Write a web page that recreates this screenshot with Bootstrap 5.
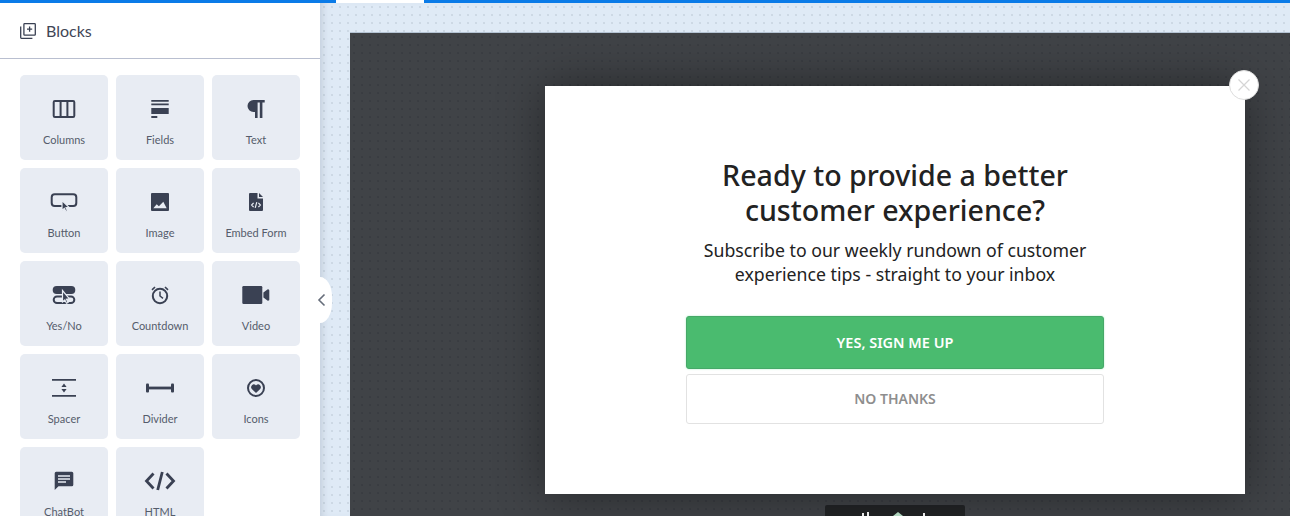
<!DOCTYPE html>
<html lang="en">
<head>
  <meta charset="UTF-8" />
  <meta name="viewport" content="width=device-width, initial-scale=1.0"/>
  <title>Blocks - Popup Editor</title>
  <link href="https://cdn.jsdelivr.net/npm/bootstrap@5.3.0/dist/css/bootstrap.min.css" rel="stylesheet">
  <style>
    html, body {
      height: 516px;
      overflow: hidden;
    }
    body {
      background: #fff;
      font-family: "Lato", "Liberation Sans", sans-serif;
    }
    .top-seg { height: 3px; background: #0a7be8; }
    .top-seg-on { width: 88px; background: #fff; }
    .top-seg-start { width: 336px; }
    .editor-main { height: 513px; }
    .side-panel {
      width: 320px;
      background: #fff;
      position: relative;
      z-index: 2;
    }
    .side-head {
      height: 56px;
      padding-left: 20px;
      gap: 10px;
      border-bottom: 1px solid #b9bfd0;
      color: #3f4656;
      font-size: 16px;
    }
    .tile-grid {
      display: grid;
      grid-template-columns: repeat(3, 88px);
      grid-auto-rows: 85px;
      gap: 8px;
      height: 457px;
      overflow: hidden;
      padding: 16px 20px;
    }
    .tile {
      background: #e8ecf3;
      border-radius: 5px;
      padding-top: 18px;
      color: #555c6b;
      font-size: 11px;
      line-height: 14px;
    }
    .tile svg { display: block; margin-bottom: 8px; }
    .ink { fill: #3a4153; }
    .ink-line { fill: none; stroke: #3a4153; stroke-width: 2; }
    .cut { fill: #e8ecf3; }
    .cut-line { fill: none; stroke: #e8ecf3; stroke-width: 1.2; }
    .side-grip {
      position: absolute;
      left: 320px;
      top: 274px;
      width: 12px;
      height: 46px;
      background: #fff;
      border-radius: 0 14px 14px 0 / 0 23px 23px 0;
    }
    .side-grip svg { position: absolute; left: -3px; top: 16px; }
    .canvas-area {
      background-color: #dfeaf6;
      background-image: radial-gradient(#ccd8e4 0.7px, transparent 0.9px);
      background-size: 8px 8px;
      padding: 29px 0 0 30px;
      box-shadow: inset 8px 0 8px -6px rgba(80, 90, 110, .22);
    }
    .stage {
      height: 484px;
      background-color: #404347;
      background-image: radial-gradient(#3a3d41 0.7px, transparent 0.9px);
      background-size: 8px 8px;
      border-top: 1px solid #b5c4d4;
      padding: 53px 0 0 195px;
    }
    .popup-box {
      position: relative;
      width: 700px;
      height: 408px;
      background: #fff;
      box-shadow: 0 0 44px rgba(0, 0, 0, .42);
      padding: 71px 141px 0 141px;
      color: #222;
      font-family: "Noto Sans", "Liberation Sans", sans-serif;
    }
    .popup-title {
      font-size: 28.6px;
      line-height: 35px;
      font-weight: 500;
      margin: 0 -20px 11px;
      color: #222;
    }
    .popup-sub {
      font-size: 17.7px;
      line-height: 24px;
      margin: 0 -20px 30px;
    }
    .popup-close {
      position: absolute;
      right: -14px;
      top: -16px;
      width: 30px;
      height: 30px;
      background: #fff;
      border: 1px solid #ddd;
      border-radius: 50%;
    }
    .btn.popup-yes, .btn.popup-no {
      border-radius: 3px;
      font-size: 14.5px;
      font-weight: 600;
      padding: 0;
    }
    .btn.popup-yes {
      height: 53px;
      line-height: 51px;
      background: #4abb6f;
      border: 1px solid #46a868;
      color: #fff;
      box-shadow: 0 0 2px #a8ecc0;
      margin-bottom: 5px;
    }
    .btn.popup-no {
      height: 50px;
      line-height: 48px;
      background: #fff;
      border: 1px solid #e2e2e2;
      color: #8e8e8e;
      font-size: 14px;
    }
    .stage-tools {
      width: 140px;
      height: 20px;
      margin: 11px 0 0 280px;
      background: #222426;
      border-radius: 2px 2px 0 0;
      padding-top: 7px;
    }
  </style>
</head>
<body>
  <div class="d-flex">
    <div class="top-seg top-seg-start"></div>
    <div class="top-seg top-seg-on"></div>
    <div class="top-seg flex-grow-1"></div>
  </div>

  <div class="editor-main d-flex">
    <aside class="side-panel flex-shrink-0">
      <div class="side-head d-flex align-items-center">
        <svg width="16" height="16" viewBox="0 0 16 16">
          <path class="ink-line" style="stroke-width:1.3" d="M4.6.7h10a.7.7 0 0 1 .7.7v10a.7.7 0 0 1-.7.7h-10a.7.7 0 0 1-.7-.7v-10a.7.7 0 0 1 .7-.7zM.7 3.6v11a.7.7 0 0 0 .7.7h11M9.6 3.6v5.2M7 6.2h5.2"/>
        </svg>
        <span>Blocks</span>
      </div>

      <div class="tile-grid">
        <div class="tile d-flex flex-column align-items-center">
          <svg width="32" height="32" viewBox="0 0 32 32"><rect class="ink-line" x="5.7" y="8" width="20.6" height="16" rx="1.2"/><path class="ink-line" d="M12.6 8v16M19.4 8v16"/></svg>
          <span>Columns</span>
        </div>
        <div class="tile d-flex flex-column align-items-center">
          <svg width="32" height="32" viewBox="0 0 32 32"><path class="ink" d="M7.3 7h17.4v1.8H7.3zM7.3 10.4h17.4v1.8H7.3zM7.3 15h17.4v6H7.3zM7.3 23h6v2h-6z"/></svg>
          <span>Fields</span>
        </div>
        <div class="tile d-flex flex-column align-items-center">
          <svg width="32" height="32" viewBox="0 0 32 32"><path class="ink" d="M24.7 7H13.5a6 6 0 0 0 0 12H15v6h2.6V9.5h2.2V25h2.6V9.5h2.3z"/></svg>
          <span>Text</span>
        </div>

        <div class="tile d-flex flex-column align-items-center">
          <svg width="32" height="32" viewBox="0 0 32 32"><rect class="ink-line" x="3.7" y="8.3" width="24.6" height="11.6" rx="3"/><path class="ink" style="stroke:#e8ecf3;stroke-width:1.2" d="M14 14.5v10l2.3-2 1.7 3 1.6-.8-1.6-3 3-.4z"/></svg>
          <span>Button</span>
        </div>
        <div class="tile d-flex flex-column align-items-center">
          <svg width="32" height="32" viewBox="0 0 32 32"><rect class="ink" x="7" y="7" width="18" height="18" rx="1"/><path class="cut" d="M9.3 22.3l3.4-4 2.2 2 4.4-4.6 3.4 6.6z"/></svg>
          <span>Image</span>
        </div>
        <div class="tile d-flex flex-column align-items-center">
          <svg width="32" height="32" viewBox="0 0 32 32"><path class="ink" d="M10 7h7.5v5.5H23V24a1 1 0 0 1-1 1H10a1 1 0 0 1-1-1V8a1 1 0 0 1 1-1zM19 7l4 4h-4z"/><path class="cut-line" d="M13.6 16.8L11.6 19l2 2.2M18.4 16.8l2 2.2-2 2.2M16.8 16.2l-1.6 5.6"/></svg>
          <span>Embed Form</span>
        </div>

        <div class="tile d-flex flex-column align-items-center">
          <svg width="32" height="32" viewBox="0 0 32 32"><rect class="ink" x="4.7" y="7" width="22.6" height="8" rx="4"/><rect class="ink-line" x="5.7" y="17.4" width="20.6" height="6.6" rx="3.3"/><path class="ink" style="stroke:#e8ecf3;stroke-width:1.2" d="M14.5 11.5v11.5l2.3-2 1.7 3.2 1.6-.8-1.6-3.2 3-.3z"/></svg>
          <span>Yes/No</span>
        </div>
        <div class="tile d-flex flex-column align-items-center">
          <svg width="32" height="32" viewBox="0 0 32 32"><circle class="ink-line" cx="16" cy="17" r="7.2"/><path class="ink-line" style="stroke-width:1.5" d="M16 12.5V17l3 2.4"/><path class="ink-line" style="stroke-width:1.6" d="M8 10.8l3-2.8M24 10.8L21 8"/></svg>
          <span>Countdown</span>
        </div>
        <div class="tile d-flex flex-column align-items-center">
          <svg width="32" height="32" viewBox="0 0 32 32"><rect class="ink" x="2.3" y="7" width="20" height="18" rx="1.2"/><path class="ink" d="M23.4 13.6l4-3.1a1.2 1.2 0 0 1 1.9 1v9a1.2 1.2 0 0 1-1.9 1l-4-3.1z"/></svg>
          <span>Video</span>
        </div>

        <div class="tile d-flex flex-column align-items-center">
          <svg width="32" height="32" viewBox="0 0 32 32"><path class="ink" d="M4 7h24v1.8H4zM4 23h24v1.8H4zM16 11.6l2.6 3.4h-5.2zM16 20.4L13.4 17h5.2z"/></svg>
          <span>Spacer</span>
        </div>
        <div class="tile d-flex flex-column align-items-center">
          <svg width="32" height="32" viewBox="0 0 32 32"><rect class="ink" x="2" y="11.4" width="3" height="9" rx="1"/><rect class="ink" x="27" y="11.4" width="3" height="9" rx="1"/><rect class="ink" x="4" y="14.6" width="24" height="2.8"/></svg>
          <span>Divider</span>
        </div>
        <div class="tile d-flex flex-column align-items-center">
          <svg width="32" height="32" viewBox="0 0 32 32"><circle class="ink-line" cx="16" cy="16" r="8"/><path class="ink" d="M16 21l-4.2-4.1a2.7 2.7 0 0 1 3.8-3.8l.4.4.4-.4a2.7 2.7 0 0 1 3.8 3.8z"/></svg>
          <span>Icons</span>
        </div>

        <div class="tile d-flex flex-column align-items-center">
          <svg width="32" height="32" viewBox="0 0 32 32"><path class="ink" d="M8.2 6.7h15.6a1.5 1.5 0 0 1 1.5 1.5v11.6a1.5 1.5 0 0 1-1.5 1.5H10.5l-3.8 3.6V8.2a1.5 1.5 0 0 1 1.5-1.5z"/><path class="cut" d="M10 10.2h12v1.6H10zM10 13.2h12v1.6H10zM10 16.2h8v1.6h-8z"/></svg>
          <span>ChatBot</span>
        </div>
        <div class="tile d-flex flex-column align-items-center">
          <svg width="32" height="32" viewBox="0 0 32 32"><path class="ink-line" style="stroke-width:2.8" d="M9.5 8.5L2.5 16l7 7.5M22.5 8.5l7 7.5-7 7.5M18.3 7l-4.6 18"/></svg>
          <span>HTML</span>
        </div>
      </div>

      <div class="side-grip">
        <svg width="10" height="14" viewBox="0 0 10 14"><path d="M7.5 1.5L2 7l5.5 5.5" fill="none" stroke="#666d7a" stroke-width="1.6"/></svg>
      </div>
    </aside>

    <main class="canvas-area flex-grow-1">
      <div class="stage">
        <div class="popup-box text-center">
          <h2 class="popup-title">Ready to provide a better customer experience?</h2>
          <p class="popup-sub">Subscribe to our weekly rundown of customer experience tips - straight to your inbox</p>
          <div class="d-grid">
            <button class="btn popup-yes">YES, SIGN ME UP</button>
            <button class="btn popup-no">NO THANKS</button>
          </div>
          <div class="popup-close d-flex align-items-center justify-content-center">
            <svg width="14" height="14" viewBox="0 0 14 14"><path d="M1.5 1.5l11 11M12.5 1.5l-11 11" stroke="#d5d5d5" stroke-width="1.2" fill="none"/></svg>
          </div>
        </div>
        <div class="stage-tools d-flex justify-content-center">
          <svg width="66" height="12" viewBox="0 0 66 12"><path fill="#fff" d="M0 1h2v8H0zM5 0h2v9H5z"/><path fill="#bfe8cf" d="M31 4l5-4 5 4v6H31z"/><path fill="#fff" d="M61 1h2v8h-2z"/></svg>
        </div>
      </div>
    </main>
  </div>
</body>
</html>
